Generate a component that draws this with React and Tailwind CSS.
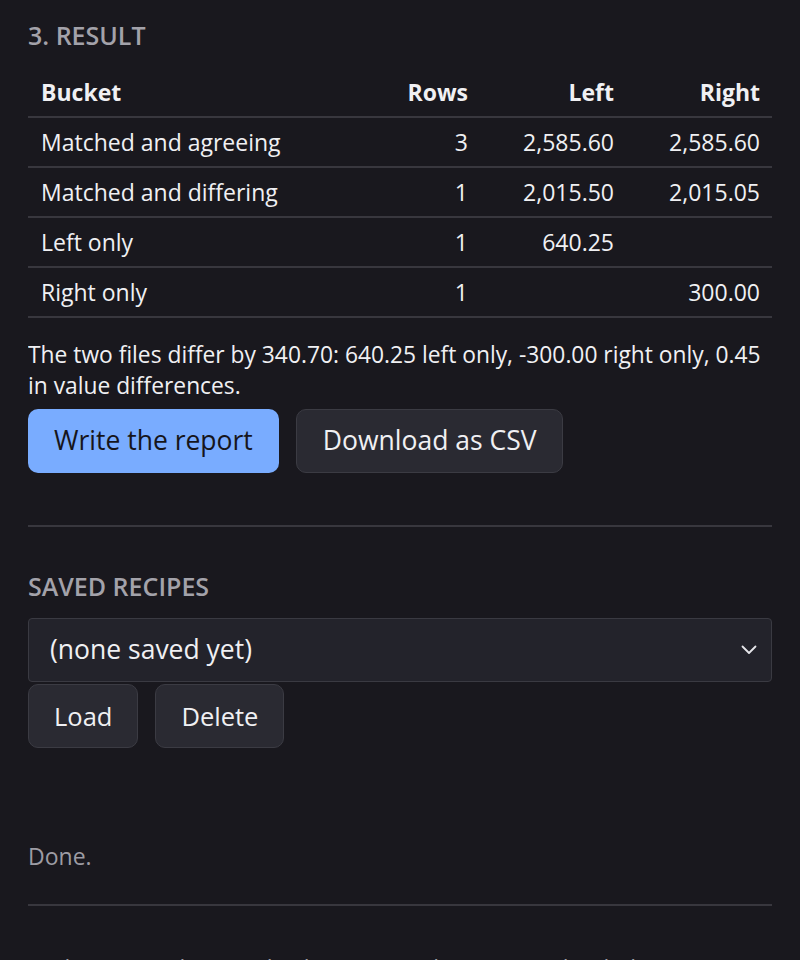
import React from "react";

const rows = [
  { bucket: "Matched and agreeing", count: "3", left: "2,585.60", right: "2,585.60" },
  { bucket: "Matched and differing", count: "1", left: "2,015.50", right: "2,015.05" },
  { bucket: "Left only", count: "1", left: "640.25", right: "" },
  { bucket: "Right only", count: "1", left: "", right: "300.00" },
];

function Chevron() {
  return (
    <svg width="16" height="10" viewBox="0 0 16 10" fill="none" className="shrink-0">
      <path d="M1.5 1.5 L8 8 L14.5 1.5" stroke="#e6e6ea" strokeWidth="1.8" strokeLinecap="round" strokeLinejoin="round" />
    </svg>
  );
}

const secondary =
  "h-[64px] px-[26px] rounded-[10px] bg-[#2a2a32] border border-[#3b3b43] text-[#f0f0f3] text-[26.5px]";
const small =
  "h-[64px] px-[25px] rounded-[10px] bg-[#2a2a32] border border-[#3b3b43] text-[#f0f0f3] text-[25.5px]";

export default function App() {
  const grid = "grid grid-cols-[1fr_82px_146px_146px] h-[50px] items-center border-b-2 border-[#38373e]";
  return (
    <div
      className="min-h-[960px] bg-[#19181e] text-[#f0f0f3] px-[28px] pt-[18px] overflow-hidden"
      style={{ fontFamily: '"Open Sans", "Noto Sans", sans-serif' }}
    >
      <div className="h-[942px] overflow-hidden">
        <h2 className="text-[25px] leading-[34px] font-semibold text-[#a3a2aa]">3. RESULT</h2>

        <div className="mt-[16px] text-[23px]">
          <div className={grid + " font-bold"}>
            <div className="pl-[13px]">Bucket</div>
            <div className="text-right pr-[12px]">Rows</div>
            <div className="text-right pr-[12px]">Left</div>
            <div className="text-right pr-[12px]">Right</div>
          </div>
          {rows.map((r) => (
            <div key={r.bucket} className={grid}>
              <div className="pl-[13px]">{r.bucket}</div>
              <div className="text-right pr-[12px]">{r.count}</div>
              <div className="text-right pr-[12px]">{r.left}</div>
              <div className="text-right pr-[12px]">{r.right}</div>
            </div>
          ))}
        </div>

        <p className="mt-[21px] text-[22.8px] leading-[31px]">
          The two files differ by 340.70: 640.25 left only, -300.00 right only, 0.45 in value differences.
        </p>

        <div className="mt-[8px] flex gap-[17px]">
          <button className="h-[64px] px-[26px] rounded-[10px] bg-[#79acff] text-[#16151b] text-[26.5px]">
            Write the report
          </button>
          <button className={secondary}>Download as CSV</button>
        </div>

        <hr className="mt-[52px] border-0 h-[2px] bg-[#38373e]" />

        <h2 className="mt-[42px] text-[25px] leading-[34px] font-semibold text-[#a3a2aa]">SAVED RECIPES</h2>

        <div className="mt-[15px] h-[64px] rounded-[4px] bg-[#23232b] border border-[#3a3a42] flex items-center justify-between pl-[21px] pr-[14px] text-[26.5px]">
          <span>(none saved yet)</span>
          <Chevron />
        </div>

        <div className="mt-[2px] flex gap-[17px]">
          <button className={small}>Load</button>
          <button className={small}>Delete</button>
        </div>

        <p className="mt-[93px] text-[23px] leading-[31px] text-[#9d9ca4]">Done.</p>

        <hr className="mt-[32px] border-0 h-[2px] bg-[#38373e]" />

        <p className="mt-[47px] text-[23px] leading-[31px] text-[#9d9ca4] whitespace-nowrap">
          Each recipe is kept in this browser and is never uploaded.
        </p>
      </div>
    </div>
  );
}
